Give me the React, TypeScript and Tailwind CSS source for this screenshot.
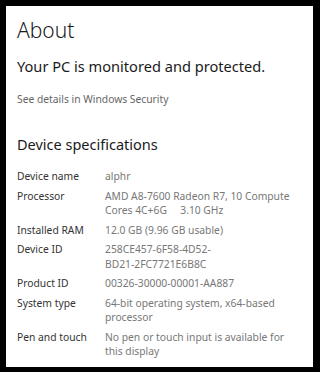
const specs = [
  { label: "Device name", value: ["alphr"] },
  { label: "Processor", value: ["AMD A8-7600 Radeon R7, 10 Compute", "Cores 4C+6G\u00a0\u00a0\u00a0\u00a0 3.10 GHz"] },
  { label: "Installed RAM", value: ["12.0 GB (9.96 GB usable)"] },
  { label: "Device ID", value: ["258CE457-6F58-4D52-", "BD21-2FC7721E6B8C"] },
  { label: "Product ID", value: ["00326-30000-00001-AA887"] },
  { label: "System type", value: ["64-bit operating system, x64-based", "processor"] },
  { label: "Pen and touch", value: ["No pen or touch input is available for", "this display"] },
];

export default function App() {
  return (
    <div
      className="w-[320px] h-[372px] bg-black pt-[6px] pl-[6px]"
      style={{ fontFamily: '"Noto Sans", "Open Sans", sans-serif' }}
    >
      <div className="w-[307px] h-[361px] bg-white pl-[11px] overflow-hidden">
        <h1 className="pt-[9px] text-[21px] leading-[30px] font-light text-[#1a1a1a]">About</h1>
        <p className="mt-[11px] text-[14.6px] leading-[20px] text-[#1a1a1a]">
          Your PC is monitored and protected.
        </p>
        <p className="mt-[16px] text-[10.3px] leading-[14px] text-[#666]">See details in Windows Security</p>

        <h2 className="mt-[28px] text-[14.5px] leading-[20px] text-[#1a1a1a]">Device specifications</h2>

        <div className="mt-[15px] flex flex-col gap-[5px] text-[10.3px] leading-[14.5px]">
          {specs.map((s) => (
            <div key={s.label} className="flex">
              <div className="w-[88px] shrink-0 text-[#333]">{s.label}</div>
              <div className="text-[#777]">
                {s.value.map((v) => (
                  <div key={v}>{v}</div>
                ))}
              </div>
            </div>
          ))}
        </div>
      </div>
    </div>
  );
}
